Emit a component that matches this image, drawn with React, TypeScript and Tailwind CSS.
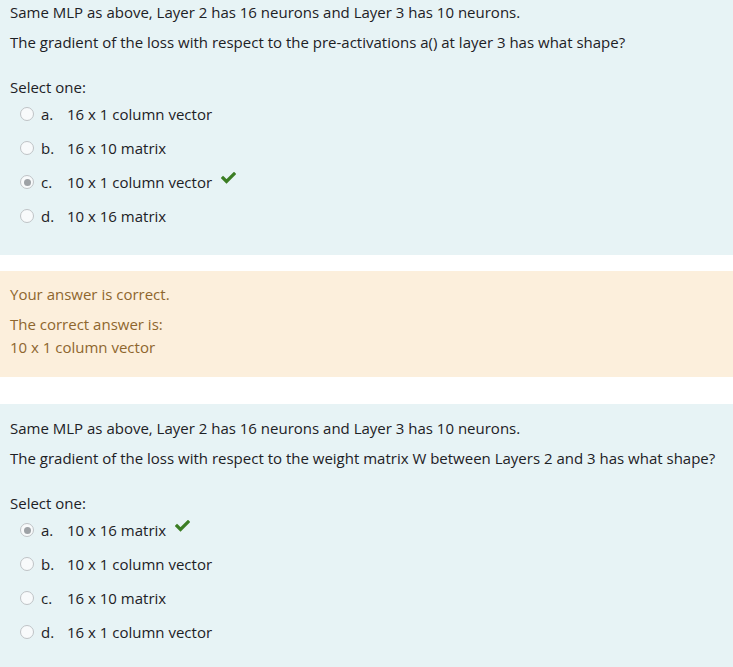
import React from 'react'

type Option = { letter: string; text: string; checked?: boolean }

const font = { fontFamily: '"Open Sans", "Liberation Sans", sans-serif' }

function Radio({ checked }: { checked?: boolean }) {
  return (
    <span className="flex h-[14px] w-[14px] items-center justify-center rounded-full border border-[#bfc3c6] bg-[#f8fafb]">
      {checked && <span className="h-[7px] w-[7px] rounded-full bg-[#9ea2a6]" />}
    </span>
  )
}

function Check() {
  return (
    <svg width="15" height="12" viewBox="0 0 15 12" className="ml-[9px] -mt-[9px]">
      <path d="M2 6 L5.5 9.5 L13 2" fill="none" stroke="#3b7d23" strokeWidth="3.2" strokeLinecap="square" />
    </svg>
  )
}

function Question({ intro, prompt, options, topPad }: { intro: string; prompt: string; options: Option[]; topPad: string }) {
  return (
    <div className={`bg-[#e7f3f5] px-[10px] ${topPad} pb-[22px] text-[#1d2125]`}>
      <p className="leading-[21px]">{intro}</p>
      <p className="mt-[9px] leading-[21px]">{prompt}</p>
      <p className="mt-[24px] leading-[21px]">Select one:</p>
      <div className="-mt-[1px] flex flex-col">
        {options.map((o) => (
          <div key={o.letter} className="flex h-[34px] items-center pl-[10px]">
            <Radio checked={o.checked} />
            <span className="ml-[7px] w-[26px]">{o.letter}.</span>
            <span>{o.text}</span>
            {o.checked && <Check />}
          </div>
        ))}
      </div>
    </div>
  )
}

export default function App() {
  return (
    <div className="w-[733px] bg-white text-[15px]" style={font}>
      <Question
        topPad="pt-[2px]"
        intro="Same MLP as above, Layer 2 has 16 neurons and Layer 3 has 10 neurons."
        prompt="The gradient of the loss with respect to the pre-activations a() at layer 3 has what shape?"
        options={[
          { letter: 'a', text: '16 x 1 column vector' },
          { letter: 'b', text: '16 x 10 matrix' },
          { letter: 'c', text: '10 x 1 column vector', checked: true },
          { letter: 'd', text: '10 x 16 matrix' },
        ]}
      />

      <div className="mt-[16px] bg-[#fcefdc] px-[10px] pt-[13px] pb-[19px] leading-[21px] text-[#8e662e]">
        <p>Your answer is correct.</p>
        <p className="mt-[9px]">The correct answer is:</p>
        <p className="mt-[2px]">10 x 1 column vector</p>
      </div>

      <div className="mt-[27px]">
        <Question
          topPad="pt-[14px]"
          intro="Same MLP as above, Layer 2 has 16 neurons and Layer 3 has 10 neurons."
          prompt="The gradient of the loss with respect to the weight matrix W between Layers 2 and 3 has what shape?"
          options={[
            { letter: 'a', text: '10 x 16 matrix', checked: true },
            { letter: 'b', text: '10 x 1 column vector' },
            { letter: 'c', text: '16 x 10 matrix' },
            { letter: 'd', text: '16 x 1 column vector' },
          ]}
        />
      </div>
    </div>
  )
}
